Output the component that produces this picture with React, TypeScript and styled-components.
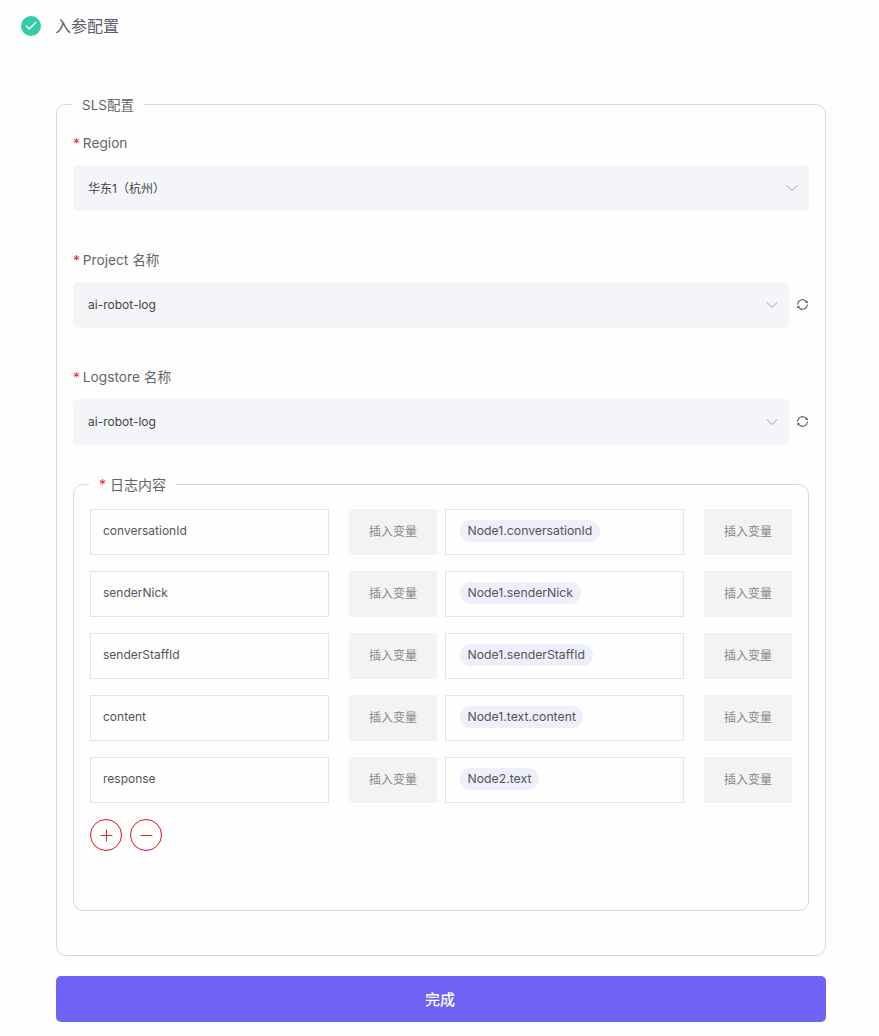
import React from "react";
import styled, { createGlobalStyle } from "styled-components";
import { ChevronDown, Check, Plus, Minus } from "lucide-react";
import { AiOutlineSync } from "react-icons/ai";

const Global = createGlobalStyle`
  html, body { margin: 0; padding: 0; background: #fefefe; }
  body { font-family: Inter, "Noto Sans CJK SC", sans-serif; color: #555; }
  * { box-sizing: border-box; }
`;

const Page = styled.div`
  width: 879px;
  height: 1036px;
  overflow: hidden;
`;
const Header = styled.header`
  display: flex;
  align-items: center;
  height: 52px;
  padding-left: 21px;
  gap: 14px;
`;
const StepIcon = styled.span`
  width: 20px;
  height: 20px;
  border-radius: 50%;
  background: #33cba8;
  color: #fff;
  display: flex;
  align-items: center;
  justify-content: center;
`;
const Title = styled.h1`
  margin: 0;
  font-size: 16px;
  line-height: 22px;
  font-weight: 400;
  color: #5c5c6b;
`;
const Main = styled.main`
  width: 770px;
  margin: 42px 0 0 56px;
`;
const OuterSet = styled.fieldset`
  margin: 0;
  min-width: 0;
  height: 862px;
  padding: 18px 16px 0;
  border: 1px solid #d9d9d9;
  border-radius: 10px;
`;
const Legend = styled.legend`
  height: 20px;
  margin-left: -1px;
  padding: 0 10px;
  font-size: 13.5px;
  line-height: 22px;
  color: #666;
`;
const Item = styled.div`
  margin-bottom: 38px;
`;
const Label = styled.div`
  font-size: 13.7px;
  line-height: 22px;
  margin-bottom: 11px;
  color: #666;
`;
const Star = styled.span<{ $gap: number }>`
  color: #f5222d;
  margin-right: ${(p) => p.$gap}px;
`;
const SelectRow = styled.div`
  display: flex;
  align-items: center;
`;
const SelectBox = styled.div`
  flex: 1;
  height: 46px;
  display: flex;
  align-items: center;
  justify-content: space-between;
  padding: 0 7px 2px 15px;
  background: #f4f5f9;
  border-radius: 5px;
  font-size: 12px;
  color: #444;
`;
const Chevron = styled(ChevronDown)`
  color: #999;
  margin-top: 2px;
`;
const Refresh = styled(AiOutlineSync)`
  margin: 0 0 2px 7px;
  color: #444;
`;
const InnerSet = styled.fieldset`
  margin: -9px 0 0;
  min-width: 0;
  height: 437px;
  padding: 15px 16px 0;
  border: 1px solid #d9d9d9;
  border-radius: 10px;
`;
const InnerLegend = styled(Legend)`
  font-size: 14px;
`;
const Rows = styled.div`
  display: flex;
  flex-direction: column;
  gap: 16px;
`;
const Row = styled.div`
  display: flex;
  gap: 8px;
`;
const Pair = styled.div`
  display: flex;
  gap: 20px;
`;
const InputBox = styled.div`
  width: 239px;
  height: 46px;
  display: flex;
  align-items: center;
  padding: 0 12px 3px;
  border: 1px solid #e4e4e4;
  font-size: 12px;
  color: #555;
`;
const TagBox = styled(InputBox)`
  padding: 0 14px 2px;
`;
const Tag = styled.span`
  height: 22px;
  display: inline-flex;
  align-items: center;
  padding: 0 7.5px 1px;
  background: #efeefc;
  border-radius: 11px;
  color: #555;
  font-size: 12.25px;
`;
const InsertBtn = styled.div`
  width: 88px;
  height: 46px;
  display: flex;
  align-items: center;
  justify-content: center;
  padding-bottom: 3px;
  background: #f3f3f3;
  font-size: 12px;
  color: #888;
`;
const Actions = styled.div`
  display: flex;
  gap: 8px;
  margin-top: 16px;
`;
const RoundBtn = styled.span`
  width: 32px;
  height: 32px;
  border: 1px solid #e81224;
  border-radius: 50%;
  color: #e81224;
  display: flex;
  align-items: center;
  justify-content: center;
`;
const Done = styled.button`
  display: block;
  width: 770px;
  height: 46px;
  margin-top: 20px;
  padding: 0 2px 2px 0;
  border: 0;
  border-radius: 5px;
  background: #6e63f6;
  color: #fff;
  font-family: inherit;
  font-size: 15px;
  font-weight: 500;
`;

const rows = [
  ["conversationId", "Node1.conversationId"],
  ["senderNick", "Node1.senderNick"],
  ["senderStaffId", "Node1.senderStaffId"],
  ["content", "Node1.text.content"],
  ["response", "Node2.text"],
];

const Field = ({ label, value, refresh }: { label: string; value: string; refresh?: boolean }) => (
  <Item>
    <Label>
      <Star $gap={3}>*</Star>
      {label}
    </Label>
    <SelectRow>
      <SelectBox>
        {value}
        <Chevron size={20} strokeWidth={1.1} />
      </SelectBox>
      {refresh && <Refresh size={13} />}
    </SelectRow>
  </Item>
);

export default function App() {
  return (
    <Page>
      <Global />
      <Header>
        <StepIcon>
          <Check size={14} strokeWidth={2.6} />
        </StepIcon>
        <Title>入参配置</Title>
      </Header>
      <Main>
        <OuterSet>
          <Legend>SLS配置</Legend>
          <Field label="Region" value="华东1（杭州）" />
          <Field label="Project 名称" value="ai-robot-log" refresh />
          <Field label="Logstore 名称" value="ai-robot-log" refresh />
          <InnerSet>
            <InnerLegend>
              <Star $gap={4}>*</Star>日志内容
            </InnerLegend>
            <Rows>
              {rows.map(([k, v]) => (
                <Row key={k}>
                  <Pair>
                    <InputBox>{k}</InputBox>
                    <InsertBtn>插入变量</InsertBtn>
                  </Pair>
                  <Pair>
                    <TagBox>
                      <Tag>{v}</Tag>
                    </TagBox>
                    <InsertBtn>插入变量</InsertBtn>
                  </Pair>
                </Row>
              ))}
            </Rows>
            <Actions>
              <RoundBtn>
                <Plus size={19} strokeWidth={1.2} />
              </RoundBtn>
              <RoundBtn>
                <Minus size={19} strokeWidth={1.2} />
              </RoundBtn>
            </Actions>
          </InnerSet>
        </OuterSet>
        <Done>完成</Done>
      </Main>
    </Page>
  );
}
